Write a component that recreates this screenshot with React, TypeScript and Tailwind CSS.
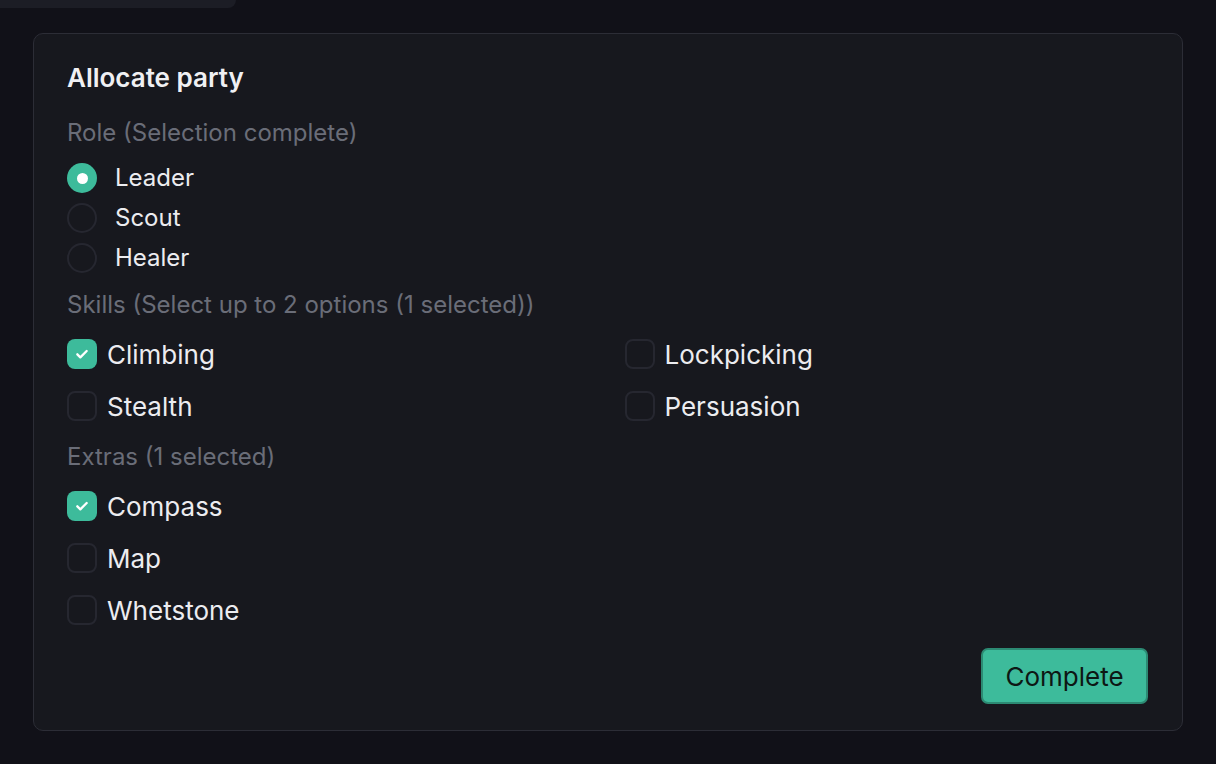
import React, { useState } from 'react';

const ff = { fontFamily: 'Inter, "Noto Sans", sans-serif' };

function Radio({ checked, label, onClick }: { checked: boolean; label: string; onClick: () => void }) {
  return (
    <button type="button" onClick={onClick} className="flex items-center h-[30px] gap-[18px] text-left">
      <span
        className={
          checked
            ? 'flex items-center justify-center w-[30px] h-[30px] rounded-full bg-[#3dbb9b]'
            : 'w-[30px] h-[30px] rounded-full border-2 border-[#262730]'
        }
      >
        {checked && <span className="w-[11px] h-[11px] rounded-full bg-white" />}
      </span>
      <span className="text-[24px] text-[#ececf0]">{label}</span>
    </button>
  );
}

function Check({ checked, label, onClick }: { checked: boolean; label: string; onClick: () => void }) {
  return (
    <button type="button" onClick={onClick} className="flex items-center h-[40px] gap-[10px] text-left">
      <span
        className={
          checked
            ? 'flex items-center justify-center w-[30px] h-[30px] rounded-[8px] bg-[#3dbb9b]'
            : 'w-[30px] h-[30px] rounded-[8px] border-2 border-[#262730]'
        }
      >
        {checked && (
          <svg width="16" height="16" viewBox="0 0 24 24" fill="none" stroke="white" strokeWidth="3.5" strokeLinecap="round" strokeLinejoin="round">
            <path d="M5 12.5l4.5 4.5L19 7.5" />
          </svg>
        )}
      </span>
      <span className="text-[26px] text-[#ececf0]">{label}</span>
    </button>
  );
}

export default function App() {
  const [role, setRole] = useState('Leader');
  const [skills, setSkills] = useState<string[]>(['Climbing']);
  const [extras, setExtras] = useState<string[]>(['Compass']);

  const toggle = (list: string[], set: (v: string[]) => void, v: string, max?: number) => {
    if (list.includes(v)) set(list.filter((x) => x !== v));
    else if (!max || list.length < max) set([...list, v]);
  };

  return (
    <div className="min-h-screen bg-[#111118]" style={ff}>
      <div className="w-[236px] h-[8px] bg-[#1c1d25] rounded-br-[16px]" />
      <div className="mx-[33px] mt-[25px] rounded-[10px] border border-[#2c2d36] bg-[#17181e] pl-[33px] pr-[34px] pt-[28px] pb-[26px]">
        <h2 className="text-[26px] leading-[32px] font-semibold text-[#f0f0f3]">Allocate party</h2>

        <div className="mt-[24px] text-[24px] leading-[30px] text-[#6a6d78]">Role (Selection complete)</div>
        <div className="mt-[15px] flex flex-col gap-[10px]">
          {['Leader', 'Scout', 'Healer'].map((r) => (
            <Radio key={r} label={r} checked={role === r} onClick={() => setRole(r)} />
          ))}
        </div>

        <div className="mt-[17px] text-[24px] leading-[30px] text-[#6a6d78]">
          Skills (Select up to 2 options ({skills.length} selected))
        </div>
        <div className="mt-[14px] grid grid-cols-2 gap-x-[34px] gap-y-[12px]">
          {['Climbing', 'Lockpicking', 'Stealth', 'Persuasion'].map((s) => (
            <Check key={s} label={s} checked={skills.includes(s)} onClick={() => toggle(skills, setSkills, s, 2)} />
          ))}
        </div>

        <div className="mt-[16px] text-[24px] leading-[30px] text-[#6a6d78]">Extras ({extras.length} selected)</div>
        <div className="mt-[14px] flex flex-col gap-[12px]">
          {['Compass', 'Map', 'Whetstone'].map((e) => (
            <Check key={e} label={e} checked={extras.includes(e)} onClick={() => toggle(extras, setExtras, e)} />
          ))}
        </div>

        <div className="mt-[18px] flex justify-end">
          <button
            type="button"
            className="h-[56px] w-[167px] rounded-[7px] border-2 border-[#2c8a73] bg-[#3dbb9b] text-[26px] text-[#0d1714]"
          >
            Complete
          </button>
        </div>
      </div>
    </div>
  );
}
